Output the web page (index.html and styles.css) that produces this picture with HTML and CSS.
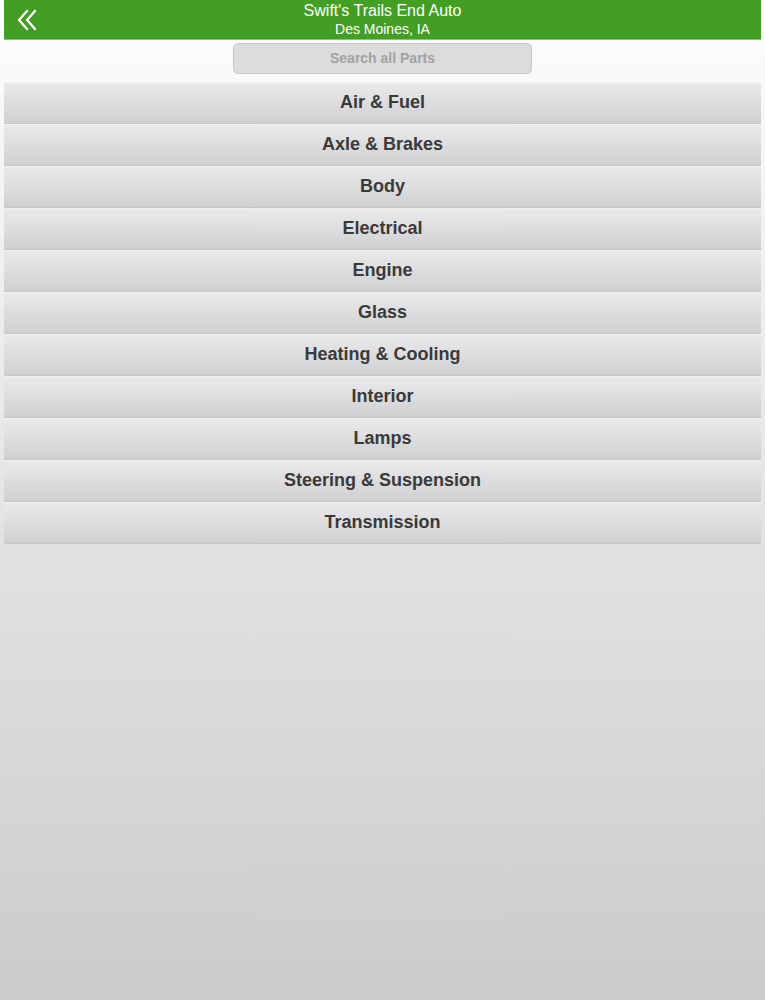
FILE: index.html
```html
<!DOCTYPE html>
<html lang="en">
<head>
    <meta charset="UTF-8">
    <meta name="viewport" content="width=device-width, initial-scale=1.0">
    <title>Parts</title>
    <link rel="stylesheet" href="styles.css">
</head>
<body>
    <header class="topbar">
        <a class="back" href="#">
            <svg width="22" height="22" viewBox="0 0 22 22" fill="none" stroke="#fff" stroke-width="2.2" stroke-linecap="square">
                <path d="M11 2 L3 11 L11 20"/>
                <path d="M19 2 L11 11 L19 20"/>
            </svg>
        </a>
        <div class="title">
            <div class="name">Swift's Trails End Auto</div>
            <div class="city">Des Moines, IA</div>
        </div>
    </header>

    <div class="search-row">
        <input type="text" class="search" placeholder="Search all Parts">
    </div>

    <ul class="parts">
        <li>Air &amp; Fuel</li>
        <li>Axle &amp; Brakes</li>
        <li>Body</li>
        <li>Electrical</li>
        <li>Engine</li>
        <li>Glass</li>
        <li>Heating &amp; Cooling</li>
        <li>Interior</li>
        <li>Lamps</li>
        <li>Steering &amp; Suspension</li>
        <li>Transmission</li>
    </ul>
</body>
</html>
```

FILE: styles.css
```css
html {
    min-height: 100%;
    background: linear-gradient(#fdfcfe 0%, #e2e1e3 55%, #cbcacc 100%);
}
body {
    font-family: "Liberation Sans", Arial, sans-serif;
    margin: 0;
    padding: 0 4px;
    min-height: 1000px;
    box-sizing: border-box;
}
.topbar {
    position: relative;
    height: 39px;
    background-color: #449e26;
    color: #fff;
    display: flex;
    align-items: center;
    justify-content: center;
    border-bottom: 1px solid #8cc76f;
}
.back {
    position: absolute;
    left: 12px;
    top: 9px;
    display: block;
    line-height: 0;
}
.title {
    text-align: center;
    line-height: 18px;
}
.title .name {
    font-size: 16px;
}
.title .city {
    font-size: 14px;
}
.search-row {
    display: flex;
    justify-content: center;
    padding-top: 3px;
    height: 42px;
    box-sizing: border-box;
}
.search {
    width: 299px;
    height: 31px;
    box-sizing: border-box;
    border: 1px solid #c8c8c8;
    border-radius: 5px;
    background-color: #dcdcdc;
    text-align: center;
    font-family: "Liberation Sans", Arial, sans-serif;
    font-size: 14px;
    font-weight: bold;
    padding-bottom: 2px;
}
.search::placeholder {
    color: #a2a2a2;
}
.parts {
    list-style: none;
    margin: 0;
    padding: 0;
}
.parts li {
    height: 42px;
    box-sizing: border-box;
    display: flex;
    align-items: center;
    justify-content: center;
    padding-bottom: 2px;
    background: linear-gradient(#eae9eb, #d0cfd1);
    border-top: 1px solid #f0eff1;
    border-bottom: 1px solid #c6c5c7;
    color: #3a3a3a;
    font-size: 18px;
    font-weight: bold;
}
```
